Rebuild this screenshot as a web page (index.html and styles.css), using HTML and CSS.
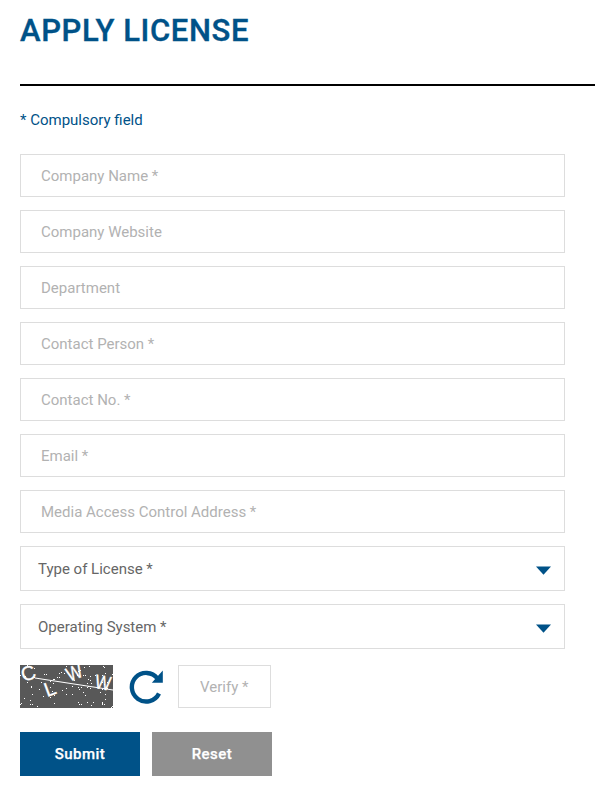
FILE: index.html
```html
<!DOCTYPE html>
<html lang="en">
<head>
<meta charset="utf-8">
<title>Apply License</title>
<link rel="stylesheet" href="styles.css">
</head>
<body>
<main class="page">
<h1 class="title">APPLY LICENSE</h1>
<p class="note">* Compulsory field</p>
<form class="form">
<input class="field" placeholder="Company Name *">
<input class="field" placeholder="Company Website">
<input class="field" placeholder="Department">
<input class="field" placeholder="Contact Person *">
<input class="field" placeholder="Contact No. *">
<input class="field" placeholder="Email *">
<input class="field" placeholder="Media Access Control Address *">
<div class="select"><span>Type of License *</span><svg class="arrow" viewBox="0 0 15 9"><path d="M0 .5H15L7.5 8.7Z"/></svg></div>
<div class="select"><span>Operating System *</span><svg class="arrow" viewBox="0 0 15 9"><path d="M0 .5H15L7.5 8.7Z"/></svg></div>
<div class="verify-row">
<svg class="captcha" viewBox="0 0 93 43">
<rect width="93" height="43" fill="#585858"/>
<g id="noise"></g>
<path d="M15 13L93 25" stroke="#fff" fill="none"/>
<g class="letters">
<text transform="translate(3.5 17) rotate(-18)">C</text>
<text transform="translate(27 32) rotate(-20)">L</text>
<text transform="translate(49.5 17) rotate(-22) scale(.84 1)">W</text>
<text transform="translate(74 23) rotate(10) scale(.84 1)">W</text>
</g>
</svg>
<svg class="refresh" viewBox="0 0 36 36"><path d="M28.5 9.5A14.3 14.3 0 1 0 30 24.5" fill="none" stroke="#005288" stroke-width="4.4"/><path d="M33.8 1.5V13.8H22.8Z" fill="#005288"/></svg>
<input class="field verify" placeholder="Verify *">
</div>
<div class="actions"><button class="btn submit" type="button">Submit</button><button class="btn reset" type="button">Reset</button></div>
</form>
</main>
<script src="noise.js"></script>
</body>
</html>
```
FILE: noise.js
```js
const noise = document.getElementById("noise");
let seed = 7;
const next = () => (seed = (seed * 16807) % 2147483647) / 2147483647;
let d = "";
for (let i = 0; i < 95; i++) d += `M${Math.floor(next() * 93)} ${Math.floor(next() * 43)}h1v1h-1z`;
const p = document.createElementNS("http://www.w3.org/2000/svg", "path");
p.setAttribute("d", d);
p.setAttribute("fill", "#fff");
noise.appendChild(p);
```
FILE: styles.css
```css
* { box-sizing: border-box; }
body { margin: 0; background: #fff; font-family: Roboto, sans-serif; font-size: 15px; overflow: hidden; }
.page { padding-left: 20px; }
.title { margin: 0; height: 86px; padding-top: 13px; border-bottom: 2px solid #000; color: #005288; font-size: 31px; line-height: 36px; font-weight: 500; letter-spacing: .6px; -webkit-text-stroke: .35px #005288; }
.note { margin: 24px 0; line-height: 20px; color: #005288; }
.form { display: flex; flex-direction: column; gap: 13px; width: 545px; }
.field { width: 100%; height: 43px; padding: 0 20px; border: 1px solid #ddd; border-radius: 0; background: #fff; font: 15px Roboto, sans-serif; }
.field::placeholder { color: #b2b2b2; opacity: 1; }
.select { display: flex; align-items: center; justify-content: space-between; height: 45px; padding: 0 13px 0 17px; border: 1px solid #ddd; color: #666; }
.arrow { width: 15px; height: 9px; margin-top: 3px; fill: #005288; }
.verify-row { display: flex; margin-top: 3px; }
.captcha { width: 93px; height: 43px; }
.letters { fill: #fff; stroke: #fff; stroke-width: .3px; font: 20px "Liberation Sans", sans-serif; }
.refresh { width: 36px; height: 36px; margin: 4px 13px 0 16px; }
.verify { width: 93px; padding: 0 21px; }
.actions { display: flex; gap: 12px; margin-top: 11px; }
.btn { width: 120px; height: 44px; padding: 0; border: 0; color: #fff; font: 500 15px Roboto, sans-serif; letter-spacing: .5px; -webkit-text-stroke: .25px #fff; }
.submit { background: #005288; }
.reset { background: #909090; }
```
